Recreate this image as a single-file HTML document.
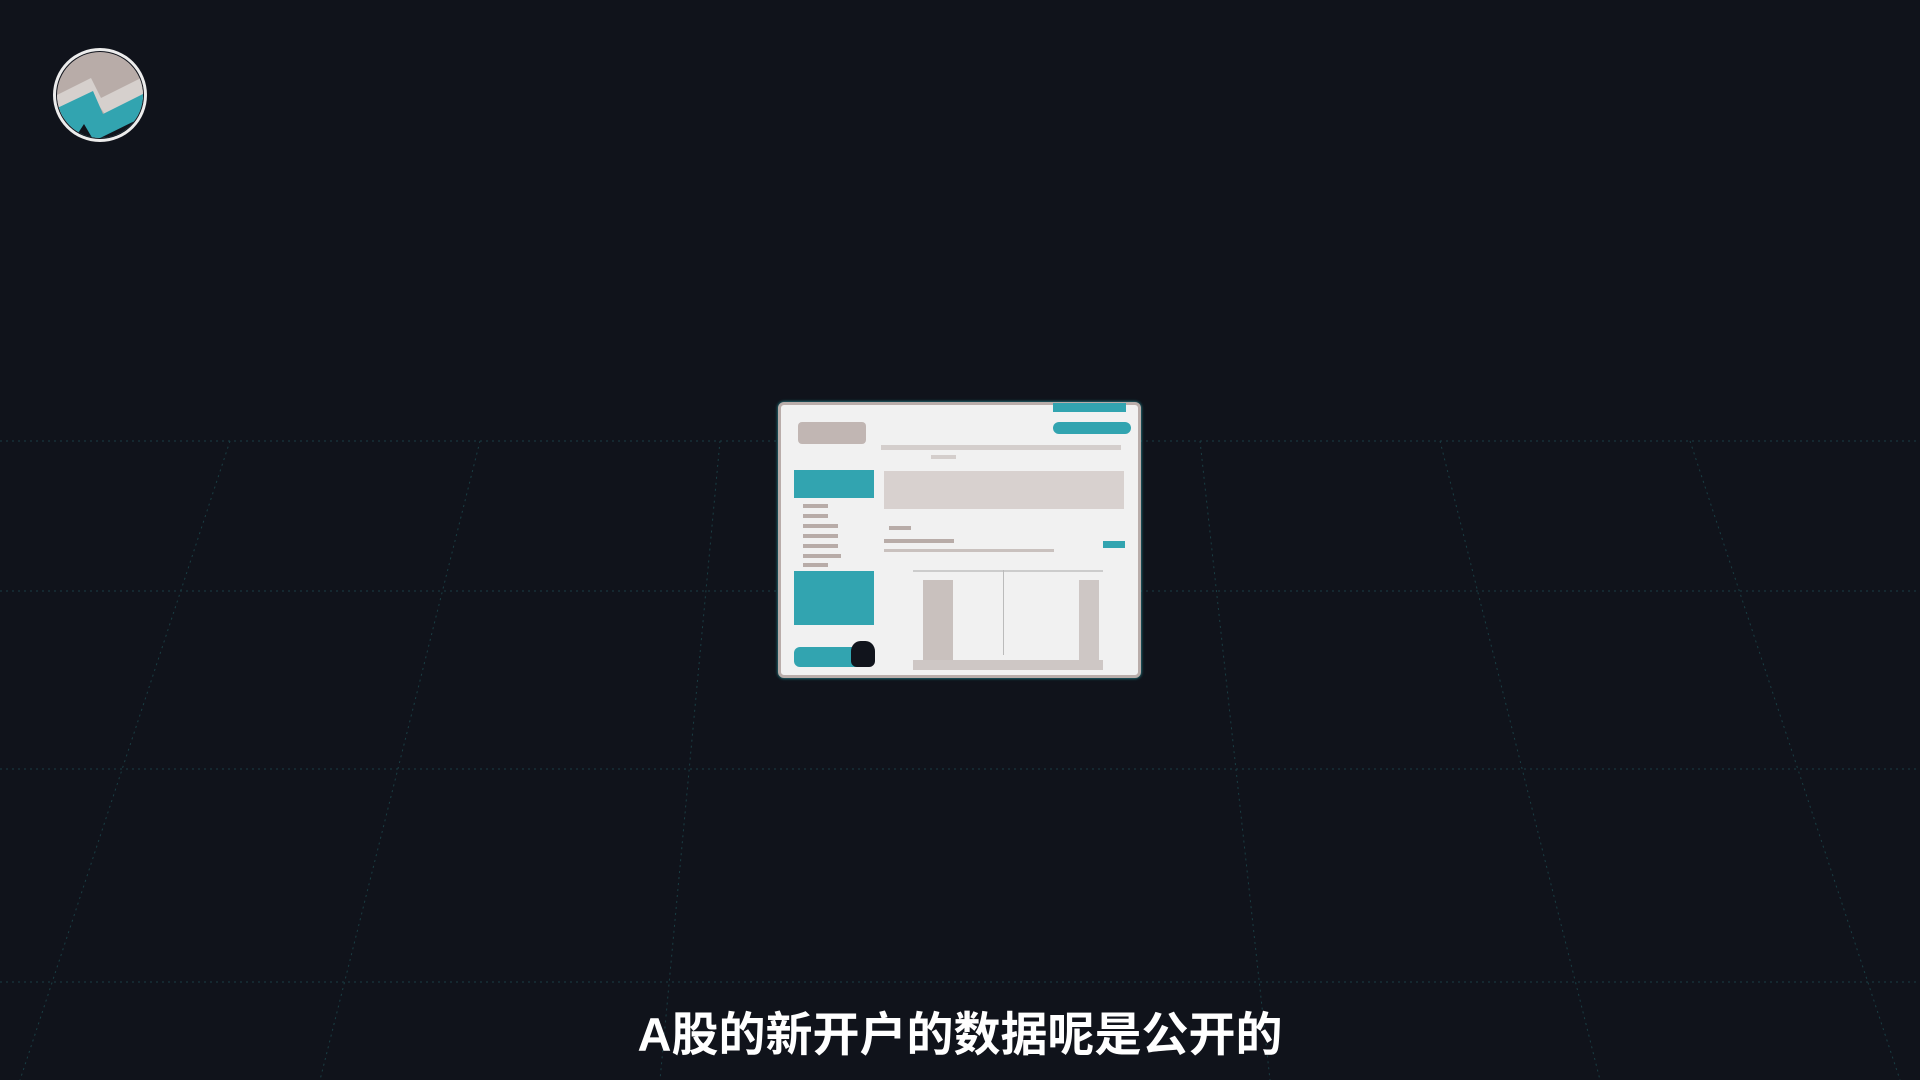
<!DOCTYPE html>
<html><head><meta charset="utf-8"><style>
html,body{margin:0;padding:0;}
body{width:1920px;height:1080px;background:#10131b;position:relative;overflow:hidden;font-family:"Liberation Sans","Noto Sans CJK SC",sans-serif;}
.a{position:absolute;}
#card{left:778px;top:402px;width:357px;height:270px;background:#f1f1f1;border:3px solid #b9adaa;border-radius:6px;box-shadow:0 0 3px #2aa0a8;}
.t{background:#32a4b0;}
.g{background:#b8aca8;}
.sub{left:0;width:1920px;top:996px;text-align:center;color:#fff;font-size:47px;font-weight:bold;letter-spacing:0;}
</style></head><body>
<svg class="a" style="left:0;top:0" width="1920" height="1080">
<g stroke="#1a3e44" stroke-width="1" stroke-dasharray="2 4" fill="none">
<line x1="0" y1="441" x2="1920" y2="441"/>
<line x1="0" y1="591" x2="1920" y2="591"/>
<line x1="0" y1="769" x2="1920" y2="769"/>
<line x1="0" y1="982" x2="1920" y2="982"/>
<line x1="230" y1="441" x2="20" y2="1080"/>
<line x1="480" y1="441" x2="320" y2="1080"/>
<line x1="720" y1="441" x2="660" y2="1080"/>
<line x1="1200" y1="441" x2="1270" y2="1080"/>
<line x1="1440" y1="441" x2="1600" y2="1080"/>
<line x1="1690" y1="441" x2="1900" y2="1080"/>
</g></svg>
<svg class="a" style="left:51px;top:46px" width="98" height="98" viewBox="0 0 98 98">
<defs><clipPath id="c"><circle cx="49" cy="49" r="43"/></clipPath></defs>
<circle cx="49" cy="49" r="47" fill="#ececec"/>
<circle cx="49" cy="49" r="44" fill="#11141c"/>
<g clip-path="url(#c)">
<rect width="98" height="98" fill="#b8aca8"/>
<path d="M0 52 L40 32 L50 52 L98 28 L98 50 L55 70 L45 55 L0 78Z" fill="#d6d0cd"/>
<path d="M0 65 L42 45 L52 68 L98 45 L98 98 L0 98Z" fill="#32a4b0"/>
<path d="M20 98 L33 78 L43 95 L98 68 L98 98Z" fill="#11141c"/>
</g></svg>
<div class="a" id="card">
<div class="a t" style="left:272px;top:-2px;width:73px;height:9px"></div>
<div class="a t" style="left:272px;top:17px;width:78px;height:12px;border-radius:6px"></div>
<div class="a g" style="left:17px;top:17px;width:68px;height:22px;border-radius:4px;opacity:.85"></div>
<div class="a g" style="left:100px;top:40px;width:240px;height:5px;opacity:.5"></div>
<div class="a g" style="left:150px;top:50px;width:25px;height:4px;opacity:.5"></div>
<div class="a t" style="left:13px;top:65px;width:80px;height:28px"></div>
<div class="a" style="left:103px;top:66px;width:240px;height:38px;background:#d8d1cf"></div>
<div class="a g" style="left:22px;top:99px;width:25px;height:4px"></div>
<div class="a g" style="left:22px;top:109px;width:25px;height:4px"></div>
<div class="a g" style="left:22px;top:119px;width:35px;height:4px"></div>
<div class="a g" style="left:22px;top:129px;width:35px;height:4px"></div>
<div class="a g" style="left:22px;top:139px;width:35px;height:4px"></div>
<div class="a g" style="left:22px;top:149px;width:38px;height:4px"></div>
<div class="a g" style="left:22px;top:158px;width:25px;height:4px"></div>
<div class="a g" style="left:108px;top:121px;width:22px;height:4px"></div>
<div class="a g" style="left:103px;top:134px;width:70px;height:4px"></div>
<div class="a g" style="left:103px;top:144px;width:170px;height:3px;opacity:.7"></div>
<div class="a t" style="left:322px;top:136px;width:22px;height:7px"></div>
<div class="a t" style="left:13px;top:166px;width:80px;height:54px"></div>
<div class="a" style="left:132px;top:165px;width:190px;height:100px;border-top:2px solid #ccc"></div>
<div class="a g" style="left:142px;top:175px;width:30px;height:80px;opacity:.7"></div>
<div class="a g" style="left:298px;top:175px;width:20px;height:80px;opacity:.6"></div>
<div class="a" style="left:222px;top:165px;width:1px;height:85px;background:#bbb"></div>
<div class="a g" style="left:132px;top:255px;width:190px;height:10px;opacity:.6"></div>
<div class="a t" style="left:13px;top:242px;width:80px;height:20px;border-radius:6px"></div>
<div class="a" style="left:70px;top:236px;width:24px;height:26px;background:#11141c;border-radius:40% 40% 6px 6px"></div>
</div>
<div class="a sub">A股的新开户的数据呢是公开的</div>
</body></html>
